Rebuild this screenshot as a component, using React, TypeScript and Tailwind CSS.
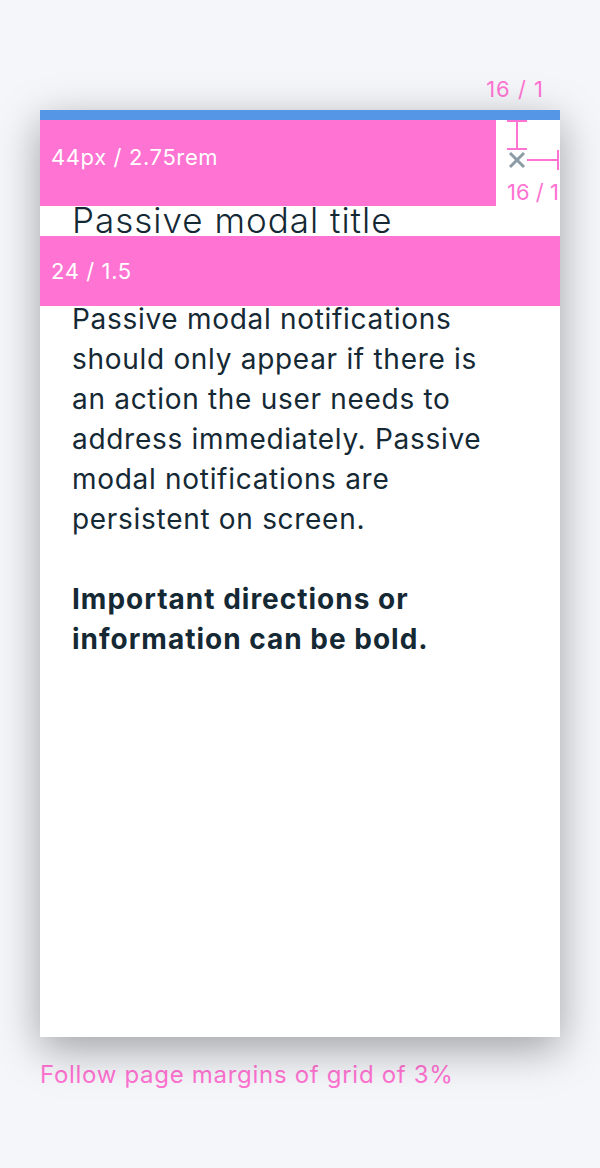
export default function App() {
  return (
    <div className="min-h-screen bg-[#f4f6fa] pt-[74px] px-[40px] font-['Inter','Liberation_Sans',sans-serif]">
      {/* top spacing label */}
      <div className="flex justify-end pr-[16px] h-[36px]">
        <span className="text-[22px] leading-[30px] tracking-[1px] text-[#ff73d2]">16 / 1</span>
      </div>

      <div className="relative h-[927px] bg-white border-t-[10px] border-[#5596e6] shadow-[0_12px_40px_rgba(0,0,0,0.35)]">
        <div className="pl-[32px] pr-[72px] pt-[80px] text-[#152935]">
          <h1 className="font-light text-[35px] leading-[40px] tracking-[1px]">Passive modal title</h1>
          <div className="mt-[59px] text-[28px] leading-[40px] tracking-[0.7px]">
            <p>
              Passive modal notifications should only appear if there is an action the user needs to address immediately.
              Passive modal notifications are persistent on screen.
            </p>
            <p className="mt-[40px] font-bold tracking-[1px]">Important directions or information can be bold.</p>
          </div>
        </div>

        {/* redline overlays */}
        <div className="absolute left-0 top-0 w-[456px] h-[86px] bg-[#ff73d2] pt-[24px] pl-[11px] text-[22px] leading-[26px] tracking-[0.6px] text-white">
          44px / 2.75rem
        </div>
        <div className="absolute left-0 right-0 top-[116px] h-[70px] bg-[#ff73d2] flex items-center pl-[11px] text-[22px] tracking-[0.6px] text-white">
          24 / 1.5
        </div>

        {/* close button with spacing callouts */}
        <div className="absolute top-0 right-0 w-[64px] flex flex-col items-start">
          <div className="ml-[11px] w-[20px] h-[30px] flex flex-col items-center justify-between">
            <div className="w-[20px] h-[2px] bg-[#ff73d2]" />
            <div className="flex-1 w-[2px] bg-[#ff73d2]" />
            <div className="w-[20px] h-[2px] bg-[#ff73d2]" />
          </div>
          <div className="flex items-center ml-[11px]">
            <button className="w-[20px] h-[20px] flex items-center justify-center">
              <svg width="20" height="20" viewBox="0 0 20 20" fill="none" stroke="#8c9ba5" strokeWidth="3">
                <path d="M3 3 L17 17 M17 3 L3 17" />
              </svg>
            </button>
            <div className="w-[30px] h-[2px] bg-[#ff73d2]" />
            <div className="w-[2px] h-[20px] bg-[#ff73d2]" />
          </div>
          <span className="ml-[11px] mt-[9px] text-[22px] leading-[26px] text-[#ff73d2] whitespace-nowrap">16 / 1</span>
        </div>
      </div>

      <p className="mt-[22px] text-[24px] leading-[32px] tracking-[0.7px] text-[#ff73d2]">Follow page margins of grid of 3%</p>
    </div>
  );
}
